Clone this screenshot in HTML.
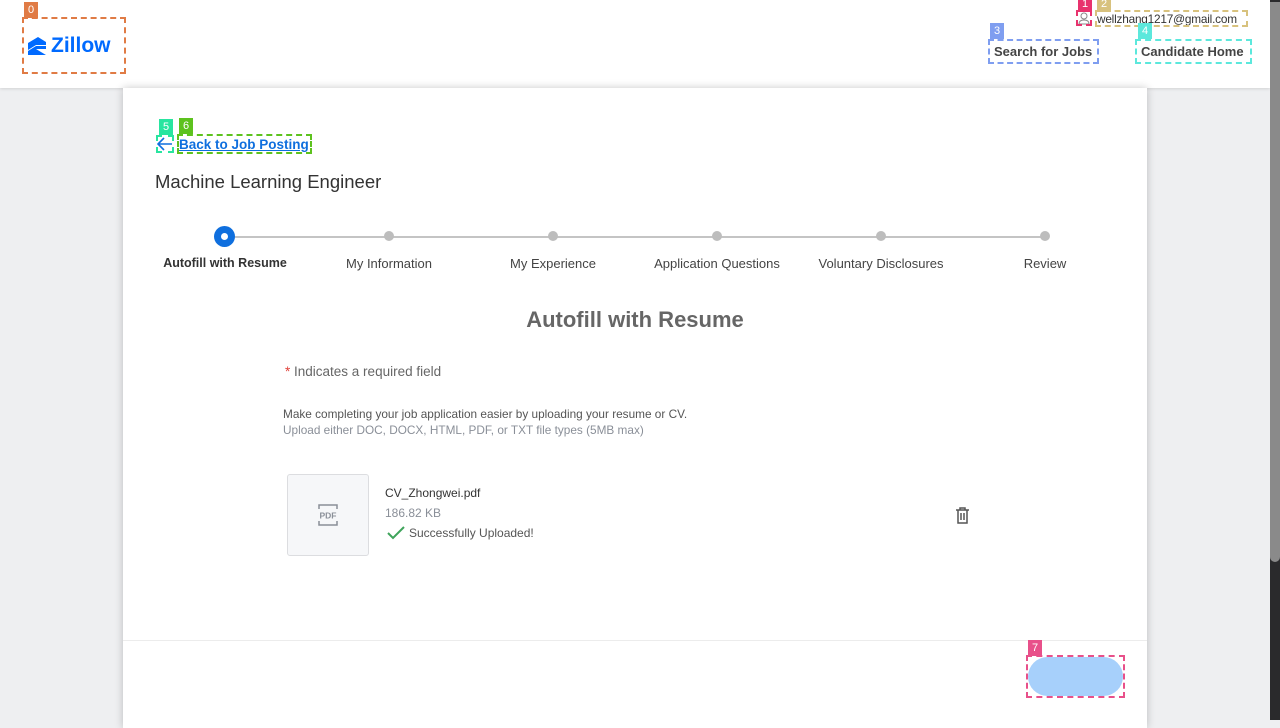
<!DOCTYPE html>
<html><head><meta charset="utf-8"><style>
*{box-sizing:border-box;margin:0;padding:0}
body{width:1280px;height:720px;overflow:hidden;background:#eeeff1;font-family:"Liberation Sans",sans-serif;position:relative;color:#333}
.abs{position:absolute}
.hdr{left:0;top:0;width:1270px;height:88px;background:#fff;box-shadow:0 1px 3px rgba(0,0,0,.12)}
.card{left:123px;top:88px;width:1024px;height:640px;background:#fff;box-shadow:0 0 8px rgba(0,0,0,.22)}
.box{position:absolute;border:2px dashed}
.tag{position:absolute;color:#fff;font-size:11px;line-height:16px;text-align:center;width:14px;height:16px}
.step{position:absolute;top:256px;font-size:13px;color:#444;width:180px;text-align:center}
.dot{position:absolute;top:231px;width:10px;height:10px;border-radius:50%;background:#bdbdbd}
</style></head><body>
<div class="abs hdr"></div>
<svg class="abs" style="left:28px;top:37px" width="20" height="18" viewBox="0 0 20 18"><path d="M0 6 L10 0 L18 5 L18 8 L8 8 L0 13Z M0 18 L0 14 L8 9 L18 9 L18 12 L8 12 L18 18Z" fill="#006aff"/></svg>
<div class="abs" style="left:51px;top:34px;font-size:21px;font-weight:bold;color:#006aff">Zillow</div>
<div class="box" style="left:22px;top:17px;width:104px;height:57px;border-color:#e07b45"></div>
<div class="tag" style="left:24px;top:2px;background:#e07b45">0</div>
<svg class="abs" style="left:1077px;top:11px" width="14" height="14" viewBox="0 0 14 14"><circle cx="7" cy="5" r="3" fill="none" stroke="#888"/><path d="M2 13 Q2 9 7 9 Q12 9 12 13Z" fill="none" stroke="#888"/></svg>
<div class="box" style="left:1076px;top:10px;width:16px;height:16px;border-color:#e8336e"></div>
<div class="tag" style="left:1078px;top:-4px;background:#e8336e">1</div>
<div class="abs" style="left:1097px;top:12px;font-size:11.8px;color:#333;letter-spacing:-0.2px">wellzhang1217@gmail.com</div>
<div class="box" style="left:1095px;top:10px;width:153px;height:17px;border-color:#d8c27e"></div>
<div class="tag" style="left:1097px;top:-4px;background:#d8c27e">2</div>
<div class="abs" style="left:994px;top:44px;font-size:13px;font-weight:bold;color:#444">Search for Jobs</div>
<div class="box" style="left:988px;top:39px;width:111px;height:25px;border-color:#7f9ef0"></div>
<div class="tag" style="left:990px;top:23px;background:#7f9ef0">3</div>
<div class="abs" style="left:1141px;top:44px;font-size:13px;font-weight:bold;color:#444">Candidate Home</div>
<div class="box" style="left:1135px;top:39px;width:117px;height:25px;border-color:#5ce8dc"></div>
<div class="tag" style="left:1138px;top:23px;background:#5ce8dc">4</div>
<div class="abs" style="left:1270px;top:0;width:10px;height:720px;background:#2a2a2c"></div>
<div class="abs" style="left:1270px;top:2px;width:10px;height:560px;background:#8a8a8a;border-radius:0 0 5px 5px"></div>
<div class="abs card"></div>
<div class="abs" style="left:123px;top:640px;width:1024px;height:1px;background:#ececec"></div>
<svg class="abs" style="left:157px;top:137px" width="16" height="14" viewBox="0 0 16 14"><path d="M15 7 H2 M7 1 L1 7 L7 13" fill="none" stroke="#0f6fde" stroke-width="1.6"/></svg>
<div class="box" style="left:156px;top:135px;width:18px;height:18px;border-color:#29e5a0"></div>
<div class="tag" style="left:159px;top:119px;background:#29e5a0">5</div>
<div class="abs" style="left:179px;top:137px;font-size:13.5px;font-weight:bold;color:#0f6fde;text-decoration:underline">Back to Job Posting</div>
<div class="box" style="left:177px;top:134px;width:135px;height:20px;border-color:#5dc21e"></div>
<div class="tag" style="left:179px;top:118px;background:#5dc21e">6</div>
<div class="abs" style="left:155px;top:171px;font-size:18.5px;color:#333">Machine Learning Engineer</div>
<div class="abs" style="left:225px;top:236px;width:820px;height:2px;background:#c4c4c4"></div>
<div class="abs" style="left:214px;top:226px;width:21px;height:21px;border-radius:50%;background:#0f6fde"></div>
<div class="abs" style="left:221px;top:233px;width:7px;height:7px;border-radius:50%;background:#fff"></div>
<div class="dot" style="left:384px"></div><div class="dot" style="left:548px"></div><div class="dot" style="left:712px"></div><div class="dot" style="left:876px"></div><div class="dot" style="left:1040px"></div>
<div class="step" style="left:135px;font-weight:bold;color:#333;font-size:12.5px">Autofill with Resume</div>
<div class="step" style="left:299px">My Information</div>
<div class="step" style="left:463px">My Experience</div>
<div class="step" style="left:627px">Application Questions</div>
<div class="step" style="left:791px">Voluntary Disclosures</div>
<div class="step" style="left:955px">Review</div>
<div class="abs" style="left:0;width:1270px;top:307px;text-align:center;font-size:22px;font-weight:bold;color:#666">Autofill with Resume</div>
<div class="abs" style="left:285px;top:364px;font-size:13.5px;color:#666"><span style="color:#e0413a">*</span> Indicates a required field</div>
<div class="abs" style="left:283px;top:407px;font-size:11.8px;color:#555">Make completing your job application easier by uploading your resume or CV.</div>
<div class="abs" style="left:283px;top:423px;font-size:11.8px;color:#8a8f98">Upload either DOC, DOCX, HTML, PDF, or TXT file types (5MB max)</div>
<div class="abs" style="left:287px;top:474px;width:82px;height:82px;border:1px solid #dcdde0;border-radius:3px;background:#f6f7f9"></div>
<svg class="abs" style="left:318px;top:504px" width="20" height="22" viewBox="0 0 20 22"><path d="M1 5 V1 H19 V5 M1 17 V21 H19 V17" fill="none" stroke="#8a8f98" stroke-width="1.5"/><text x="10" y="14.5" font-size="8.5" font-weight="bold" fill="#8a8f98" text-anchor="middle" font-family="Liberation Sans">PDF</text></svg>
<div class="abs" style="left:385px;top:486px;font-size:12px;color:#333">CV_Zhongwei.pdf</div>
<div class="abs" style="left:385px;top:506px;font-size:12px;color:#8a8f98">186.82 KB</div>
<svg class="abs" style="left:387px;top:525px" width="18" height="15" viewBox="0 0 18 15"><path d="M1 8 L6 13 L17 2" fill="none" stroke="#3fa45b" stroke-width="2"/></svg>
<div class="abs" style="left:409px;top:526px;font-size:12px;color:#555">Successfully Uploaded!</div>
<svg class="abs" style="left:955px;top:507px" width="15" height="17" viewBox="0 0 15 17"><path d="M1 3 H14 M5 3 V1 H10 V3 M3 3 V16 H12 V3 M6 6 V13 M9 6 V13" fill="none" stroke="#555" stroke-width="1.5"/></svg>
<div class="abs" style="left:1028px;top:657px;width:95px;height:39px;border-radius:20px;background:#a7d0fb"></div>
<div class="box" style="left:1026px;top:655px;width:99px;height:43px;border-color:#e8508a"></div>
<div class="tag" style="left:1028px;top:640px;background:#e8508a">7</div>
</body></html>
